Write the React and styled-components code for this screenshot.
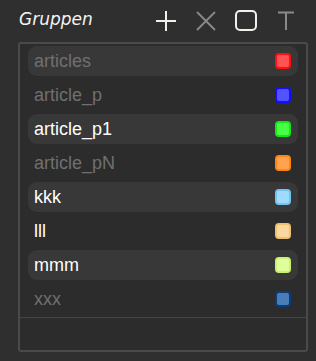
import React from "react";
import styled, { createGlobalStyle } from "styled-components";

const Global = createGlobalStyle`
  html, body { margin: 0; padding: 0; background: #2f2f2f; }
  body { font-family: "Liberation Sans", Arial, sans-serif; }
`;

const Page = styled.div`
  width: 316px;
  height: 361px;
  box-sizing: border-box;
  padding: 0 8px 0 18px;
  background: #2f2f2f;
  display: flex;
  flex-direction: column;
`;

const Header = styled.div`
  height: 42px;
  display: flex;
  align-items: center;
  padding-right: 10px;
`;

const Title = styled.div`
  flex: 1;
  color: #f4f4f4;
  font-family: "DejaVu Sans", "Liberation Sans", sans-serif;
  font-style: italic;
  font-size: 17px;
  padding: 0 0 5px 1px;
`;

const Tools = styled.div`
  display: flex;
  gap: 16px;
  align-items: center;
`;

const ToolButton = styled.div`
  width: 24px;
  height: 24px;
  display: flex;
  align-items: center;
  justify-content: center;
  color: ${(p) => (p.$dim ? "#8a8a8a" : "#f2f0ea")};
  svg { display: block; }
`;

const Panel = styled.div`
  width: 290px;
  height: 310px;
  box-sizing: border-box;
  border: 2px solid #4a4a4a;
  border-radius: 3px;
  background-color: #2c2c2c;
  display: flex;
  flex-direction: column;
`;

const List = styled.div`
  display: flex;
  flex-direction: column;
  gap: 4px;
  padding: 2px 8px 2px 8px;
`;

const Row = styled.div`
  height: 30px;
  display: flex;
  align-items: center;
  padding: 0 7px 0 6px;
  border-radius: 9px;
  background: ${(p) =>
    p.$striped
      ? "repeating-conic-gradient(#3a3a3a 0% 25%, #363636 0% 50%) 0 0 / 2px 2px"
      : "transparent"};
`;

const Name = styled.div`
  flex: 1;
  font-size: 18px;
  color: ${(p) => (p.$active ? "#ffffff" : "#707070")};
`;

const Swatch = styled.div`
  width: 16px;
  height: 16px;
  box-sizing: border-box;
  border-radius: 4px;
  border: 2px solid ${(p) => p.$edge};
  background: ${(p) => p.$fill};
`;

const Separator = styled.div`
  height: 1px;
  background: #454545;
  margin-top: 1px;
`;

const rows = [
  { name: "articles", active: false, edge: "#ff1010", fill: "#ff5252" },
  { name: "article_p", active: false, edge: "#1010ff", fill: "#5252ff" },
  { name: "article_p1", active: true, edge: "#14e814", fill: "#48ff48" },
  { name: "article_pN", active: false, edge: "#ff8510", fill: "#ffa352" },
  { name: "kkk", active: true, edge: "#74c4f2", fill: "#a0dbff" },
  { name: "lll", active: true, edge: "#f0c070", fill: "#f8d89e" },
  { name: "mmm", active: true, edge: "#c8f270", fill: "#e0ff9c" },
  { name: "xxx", active: false, edge: "#0d3b7a", fill: "#4a7db5" },
];

export default function App() {
  return (
    <>
      <Global />
      <Page>
        <Header>
          <Title>Gruppen</Title>
          <Tools>
            <ToolButton>
              <svg width="24" height="24" viewBox="0 0 24 24">
                <path d="M12 2v20M2 12h20" stroke="currentColor" strokeWidth="2" fill="none" />
              </svg>
            </ToolButton>
            <ToolButton $dim>
              <svg width="24" height="24" viewBox="0 0 24 24">
                <path d="M3 3l18 18M21 3L3 21" stroke="currentColor" strokeWidth="1.8" fill="none" />
              </svg>
            </ToolButton>
            <ToolButton>
              <svg width="24" height="24" viewBox="0 0 24 24">
                <rect x="2" y="2" width="20" height="19" rx="4" stroke="currentColor" strokeWidth="2" fill="none" />
              </svg>
            </ToolButton>
            <ToolButton $dim>
              <svg width="24" height="24" viewBox="0 0 24 24">
                <path d="M4 3.5h16M12 3.5V21" stroke="currentColor" strokeWidth="2" fill="none" />
              </svg>
            </ToolButton>
          </Tools>
        </Header>
        <Panel>
          <List>
            {rows.map((r, i) => (
              <Row key={r.name} $striped={i % 2 === 0}>
                <Name $active={r.active}>{r.name}</Name>
                <Swatch $edge={r.edge} $fill={r.fill} />
              </Row>
            ))}
          </List>
          <Separator />
        </Panel>
      </Page>
    </>
  );
}
